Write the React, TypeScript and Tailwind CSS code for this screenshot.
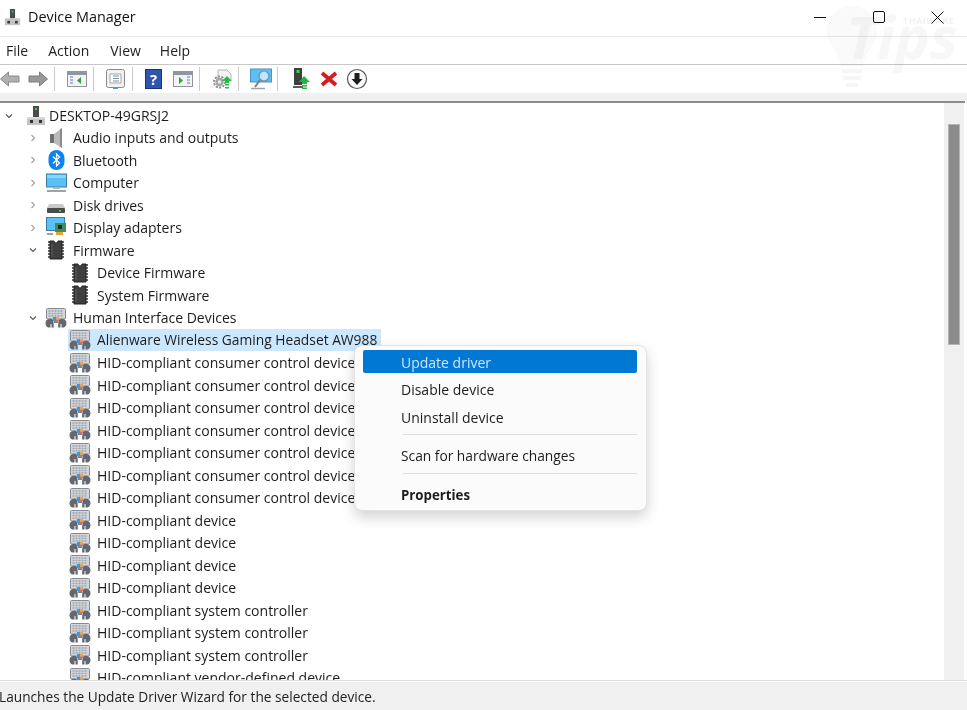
import React from "react";

const font = "font-['Open_Sans','Noto_Sans',sans-serif]";

const HidIcon = () => (
  <svg width="22" height="20" viewBox="0 0 22 20" className="shrink-0">
    <rect x="1.500" y="0.500" width="19" height="10.500" rx="1" fill="#d3d7dc" stroke="#858a92" />
    <path d="M3.500 3h15M3.500 5.500h15M3.500 8h15" stroke="#9fa4ac" strokeWidth="1.400" strokeDasharray="2 1" />
    <path d="M3.500 19.500C1 19 0 16 .8 13.500 1.500 11.500 4 10.500 6.500 11c2.300.5 2.300 4.500 2.300 8.500H6.500v-3.500h-1v3.500z" fill="#636870" />
    <path d="M18.500 19.500C21 19 22 16 21.200 13.500 20.500 11.500 18 10.500 15.500 11c-2.300.5-2.300 4.500-2.300 8.500h2.300v-3.500h1v3.500z" fill="#636870" />
    <rect x="8" y="9" width="3" height="4" fill="#3f97e2" />
    <rect x="11" y="9" width="3" height="2.500" fill="#e9a84a" />
    <rect x="11" y="11.500" width="3" height="1.500" fill="#d87070" />
    <rect x="9" y="13" width="4" height="2" fill="#808590" />
  </svg>
);

const ChipIcon = () => (
  <svg width="18" height="20" viewBox="0 0 18 20" className="shrink-0">
    <path d="M1 2h2M1 5h2M1 8h2M1 11h2M1 14h2M1 17h2M15 2h2M15 5h2M15 8h2M15 11h2M15 14h2M15 17h2" stroke="#333" strokeWidth="1.600" />
    <path d="M3 1h4a2 2 0 0 0 4 0h4v18H3z" fill="#3f3f3f" stroke="#222" />
    <path d="M5 4v13" stroke="#5d5d5d" />
  </svg>
);

const PcIcon = () => (
  <svg width="20" height="20" viewBox="0 0 20 20" className="shrink-0">
    <rect x="7" y="0" width="6" height="11" fill="#4c4c4c" />
    <rect x="9" y="2" width="2" height="2" fill="#39d353" />
    <rect x="1" y="11" width="18" height="8" fill="#c4c4c4" />
    <rect x="1" y="11" width="18" height="2" fill="#dadada" />
    <rect x="4" y="14" width="3" height="3" fill="#333" />
    <rect x="13" y="14" width="3" height="3" fill="#333" />
  </svg>
);

const SpeakerIcon = () => (
  <svg width="20" height="20" viewBox="0 0 20 20" className="shrink-0">
    <path d="M4 6h4v9H4z" fill="#6f6f6f" />
    <path d="M8 6l8-6v20l-8-5z" fill="#b9b9b9" />
    <path d="M14 1.500l2-1.500v20l-2-1.300z" fill="#8a8a8a" />
  </svg>
);

const BluetoothIcon = () => (
  <svg width="17" height="20" viewBox="0 0 17 20" className="ml-[1px] shrink-0">
    <rect x="0.500" y="0" width="16" height="20" rx="8" fill="#0a84f0" />
    <path d="M5 6.500l6.500 6.500-3 3V4l3 3L5 13.500" fill="none" stroke="#fff" strokeWidth="1.200" />
  </svg>
);

const MonitorIcon = () => (
  <svg width="21" height="20" viewBox="0 0 21 20" className="shrink-0">
    <rect x="0.500" y="1" width="20" height="13" fill="#5bc0f5" stroke="#3a7ca5" />
    <path d="M1 2h19v3H1z" fill="#8ad6fa" />
    <rect x="7" y="14" width="7" height="2" fill="#b5b5b5" />
    <rect x="1" y="17" width="19" height="2" fill="#9ea3a8" />
  </svg>
);

const DiskIcon = () => (
  <svg width="20" height="20" viewBox="0 0 20 20" className="shrink-0">
    <path d="M3 9h14l2 4H1z" fill="#c9c9c9" />
    <rect x="1" y="13" width="18" height="5" rx="1" fill="#4a4a4a" />
    <rect x="13" y="15" width="2" height="1.500" fill="#45e060" />
  </svg>
);

const DisplayIcon = () => (
  <svg width="21" height="21" viewBox="0 0 21 21" className="shrink-0">
    <rect x="0.500" y="0.500" width="18" height="13" fill="#5bc0f5" stroke="#3a7ca5" />
    <rect x="9" y="6" width="11" height="9" fill="#3f8f5a" />
    <rect x="12" y="8" width="4" height="4" fill="#23292b" />
    <rect x="10" y="15" width="7" height="3" fill="#e9a52f" />
    <rect x="1" y="16" width="6" height="2" fill="#9ea3a8" />
  </svg>
);

const Chevron = ({ open }: { open: boolean }) => (
  <svg width="8" height="8" viewBox="0 0 8 8" className="shrink-0">
    <path d={open ? "M1 2.500l3 3 3-3" : "M2.500 1l3 3-3 3"} fill="none" stroke={open ? "#555" : "#a0a0a0"} strokeWidth="1.100" />
  </svg>
);

const Sep = () => <div className="h-[24px] w-px shrink-0 bg-[#c9c9c9]" />;

const ToolbarIcons = () => (
  <div className="flex h-[28px] shrink-0 items-center">
    <div className="flex w-[54px] shrink-0 items-center">
      <svg width="20" height="16" viewBox="0 0 20 16" className="shrink-0">
        <path d="M.5 8l8-7v4h10.500v6H8.500v4z" fill="#b0b0b0" stroke="#8a8a8a" />
      </svg>
      <svg width="20" height="16" viewBox="0 0 20 16" className="ml-[8px] shrink-0">
        <path d="M19.500 8l-8-7v4H1v6h10.500v4z" fill="#999" stroke="#7c7c7c" />
      </svg>
    </div>
    <Sep />
    <svg width="20" height="16" viewBox="0 0 20 16" className="ml-[12px] mr-[6px] shrink-0">
      <rect x="0.500" y="0.500" width="19" height="15" fill="#f3f3f3" stroke="#8e96a0" />
      <rect x="1" y="1" width="18" height="3" fill="#8e96a0" />
      <path d="M3 6h3M3 9h3M3 12h3" stroke="#5a7fb5" />
      <path d="M14 6v7l-4-3.500z" fill="#30a040" />
    </svg>
    <Sep />
    <svg width="19" height="20" viewBox="0 0 19 20" className="ml-[12px] mr-[7px] shrink-0">
      <rect x="0.500" y="0.500" width="18" height="18" rx="2" fill="#f2f2f2" stroke="#8a8a8a" />
      <path d="M4 5h11v9H4z" fill="#fff" stroke="#a5a5a5" />
      <path d="M7 7h6M7 9.500h6M7 12h6" stroke="#7b8ea5" />
      <rect x="7" y="18" width="5" height="2" fill="#3aa0e0" />
    </svg>
    <Sep />
    <div className="ml-[12px] flex h-[20px] w-[17px] shrink-0 items-center justify-center border border-[#1c3475] bg-[#2f55b0] text-[15px] font-bold leading-none text-white">?</div>
    <svg width="20" height="16" viewBox="0 0 20 16" className="ml-[11px] mr-[6px] shrink-0">
      <rect x="0.500" y="0.500" width="19" height="15" fill="#f3f3f3" stroke="#8e96a0" />
      <rect x="1" y="1" width="18" height="3" fill="#8e96a0" />
      <path d="M14 6h3M14 9h3M14 12h3" stroke="#5a7fb5" />
      <path d="M6 6v7l4-3.500z" fill="#30a040" />
    </svg>
    <Sep />
    <svg width="21" height="21" viewBox="0 0 21 21" className="ml-[12px] mr-[5px] shrink-0">
      <path d="M6 1h9l4 4v6H6z" fill="#f3f3f3" stroke="#b5b5b5" />
      <circle cx="7.500" cy="13" r="5.500" fill="none" stroke="#8f8f8f" strokeWidth="2" strokeDasharray="2 1.400" />
      <circle cx="7.500" cy="13" r="4.200" fill="#a5a5a5" />
      <circle cx="7.500" cy="13" r="1.800" fill="#eee" />
      <path d="M15 7l5 5h-3v2h-4v-2h-3z" fill="#2fb84a" />
      <path d="M13 15h4v1.500h-4zM13 18h4v1.500h-4z" fill="#2fb84a" />
    </svg>
    <Sep />
    <svg width="22" height="22" viewBox="0 0 22 22" className="ml-[11px] mr-[5px] shrink-0">
      <rect x="0.500" y="1" width="21" height="13" fill="#5bc0f5" stroke="#4e93bd" />
      <path d="M1 20.500h14" stroke="#9ea3a8" strokeWidth="1.500" />
      <circle cx="14" cy="8" r="5" fill="#bfe6fa" stroke="#6f8fa5" strokeWidth="1.200" />
      <path d="M10 12l-5 7" stroke="#7d7d7d" strokeWidth="2" />
    </svg>
    <Sep />
    <svg width="17" height="22" viewBox="0 0 17 22" className="ml-[15px] shrink-0">
      <rect x="1" y="0" width="8" height="17" fill="#3f3f3f" />
      <rect x="3.500" y="2" width="3" height="3" fill="#39d353" />
      <rect x="0" y="18" width="10" height="2" fill="#5a5a5a" />
      <path d="M11 8l6 6h-3v2H9v-2H6z" fill="#23b33f" />
      <path d="M9 17h5v1.400H9zM9 19.500h5v1.400H9z" fill="#23b33f" />
    </svg>
    <svg width="18" height="18" viewBox="0 0 18 18" className="ml-[10px] shrink-0">
      <path d="M2 3l14 12M16 3L2 15" stroke="#d81c1c" strokeWidth="3.800" />
    </svg>
    <svg width="22" height="22" viewBox="0 0 22 22" className="ml-[8px] shrink-0">
      <circle cx="11" cy="11" r="9.500" fill="#fbfbfb" stroke="#5a5a5a" strokeWidth="1.200" />
      <path d="M8.500 5h5v6h3L11 17l-5.500-6h3z" fill="#1e1e1e" />
    </svg>
  </div>
);

const Row = ({
  depth,
  label,
  icon,
  open,
  selected,
}: {
  depth: number;
  label: string;
  icon: React.ReactNode;
  open?: boolean;
  selected?: boolean;
}) => {
  const iconBox = <div className="flex w-[24px] shrink-0 items-center justify-center">{icon}</div>;
  return (
    <div className="flex h-[22.5px] shrink-0 items-center">
      <div style={{ width: depth * 24 }} className="shrink-0" />
      <div className="flex w-[44px] shrink-0 items-center pl-[29px]">{open !== undefined && <Chevron open={open} />}</div>
      {selected ? (
        <div className="flex h-[22px] items-center bg-[#cce8ff] pr-[4px]">
          {iconBox}
          <span className="ml-[5px] whitespace-nowrap text-[13.8px]">{label}</span>
        </div>
      ) : (
        <>
          {iconBox}
          <span className="ml-[5px] whitespace-nowrap">{label}</span>
        </>
      )}
    </div>
  );
};

const hidConsumer = Array.from({ length: 7 }, () => "HID-compliant consumer control device");
const hidDevice = Array.from({ length: 4 }, () => "HID-compliant device");
const hidSystem = Array.from({ length: 3 }, () => "HID-compliant system controller");

const App = () => {
  return (
    <div className={`relative flex h-[710px] w-[967px] flex-col overflow-hidden bg-white text-[14px] text-[#1c1c1c] ${font}`}>
      {/* title bar */}
      <div className="flex h-[37px] shrink-0 items-center border-b border-[#e6e6e6] pb-[2px] pl-[4px]">
        <svg width="17" height="19" viewBox="0 0 20 20" className="shrink-0">
          <rect x="7" y="0" width="6" height="11" fill="#4c4c4c" />
          <rect x="9" y="2" width="2" height="2" fill="#39d353" />
          <rect x="1" y="11" width="18" height="8" fill="#c4c4c4" />
          <rect x="4" y="14" width="3" height="3" fill="#333" />
          <rect x="13" y="14" width="3" height="3" fill="#333" />
        </svg>
        <span className="ml-[7px] text-[14.4px] text-[#111]">Device Manager</span>
        <div className="ml-auto flex items-center">
          <div className="h-px w-[12px] bg-[#111]" />
          <div className="ml-[47px] h-[12px] w-[12px] rounded-[2px] border border-[#111]" />
          <svg width="13" height="13" viewBox="0 0 13 13" className="ml-[46px] mr-[23px]">
            <path d="M0.500 0.500l12 12M12.500 0.500l-12 12" stroke="#111" />
          </svg>
        </div>
      </div>
      {/* menu */}
      <div className="flex h-[28px] shrink-0 items-center border-b border-[#c8c8c8] pl-[6px] text-[#222]">
        <span>File</span>
        <span className="ml-[20px]">Action</span>
        <span className="ml-[21px]">View</span>
        <span className="ml-[19px]">Help</span>
      </div>
      <ToolbarIcons />
      <div className="h-[8px] shrink-0 bg-[#f0f0f0]" />
      <div className="mr-[2px] h-[2px] shrink-0 bg-[#8c8c8c]" />
      {/* tree */}
      <div className="flex min-h-0 flex-1 pr-[3px]">
        <div className="min-w-0 flex-1 overflow-hidden pt-[1.75px]">
          <div className="flex h-[21.5px] items-center pl-[5px]">
            <div className="w-[19px] shrink-0"><Chevron open /></div>
            <div className="flex w-[24px] shrink-0 items-center justify-center"><PcIcon /></div>
            <span className="ml-[1px] whitespace-nowrap">DESKTOP-49GRSJ2</span>
          </div>
          <Row depth={0} label="Audio inputs and outputs" icon={<SpeakerIcon />} open={false} />
          <Row depth={0} label="Bluetooth" icon={<BluetoothIcon />} open={false} />
          <Row depth={0} label="Computer" icon={<MonitorIcon />} open={false} />
          <Row depth={0} label="Disk drives" icon={<DiskIcon />} open={false} />
          <Row depth={0} label="Display adapters" icon={<DisplayIcon />} open={false} />
          <Row depth={0} label="Firmware" icon={<ChipIcon />} open />
          <Row depth={1} label="Device Firmware" icon={<ChipIcon />} />
          <Row depth={1} label="System Firmware" icon={<ChipIcon />} />
          <Row depth={0} label="Human Interface Devices" icon={<HidIcon />} open />
          <Row depth={1} label="Alienware Wireless Gaming Headset AW988" icon={<HidIcon />} selected />
          {hidConsumer.map((name, i) => (
            <Row key={i} depth={1} label={name} icon={<HidIcon />} />
          ))}
          {hidDevice.map((name, i) => (
            <Row key={i} depth={1} label={name} icon={<HidIcon />} />
          ))}
          {hidSystem.map((name, i) => (
            <Row key={i} depth={1} label={name} icon={<HidIcon />} />
          ))}
          <Row depth={1} label="HID-compliant vendor-defined device" icon={<HidIcon />} />
        </div>
        <div className="flex w-[20px] shrink-0 justify-end bg-[#f0f0f0] pr-[4px] pt-[21px]">
          <div className="h-[221px] w-[12px] border border-[#b5b5b5] bg-[#8b8b8b]" />
        </div>
      </div>
      {/* status bar */}
      <div className="h-[30px] shrink-0 border-t border-[#dcdcdc]">
        <div className="flex h-full items-center border-t border-white bg-[#f0f0f0] pt-[2px] text-[#222]">
          <span className="-ml-[1px] whitespace-nowrap text-[13.7px]">Launches the Update Driver Wizard for the selected device.</span>
        </div>
      </div>

      {/* context menu */}
      <div className="absolute left-[354px] top-[345px] w-[293px] rounded-[8px] border border-[#e3e3e3] bg-[#fbfbfb] pl-[8px] pr-[9px] pt-[4px] pb-[1px] shadow-[0_6px_14px_rgba(0,0,0,0.18)]">
        <div className="flex h-[23px] items-center rounded-[2px] bg-[#0078d4] pl-[38px] pt-[1px] text-[#cfe6fa]">Update driver</div>
        <div className="mt-[3px] flex h-[27.5px] items-center pl-[38px]">Disable device</div>
        <div className="flex h-[27.5px] items-center pl-[38px]">Uninstall device</div>
        <div className="ml-[40px] mt-[3px] h-px bg-[#dedede]" />
        <div className="flex h-[38px] items-center pl-[38px] pt-[4px] text-[13.75px]">Scan for hardware changes</div>
        <div className="ml-[40px] h-px bg-[#dedede]" />
        <div className="flex h-[35px] items-center pl-[38px] pt-[9px] text-[13.25px] font-bold">Properties</div>
      </div>

      {/* watermark */}
      <svg width="52" height="84" viewBox="0 0 52 84" className="pointer-events-none absolute left-[826px] top-[5px] mix-blend-multiply">
        <path d="M26 1C12 1 1 12 1 26c0 9 5 15 9 21 3 5 4 9 5 14h22c1-5 2-9 5-14 4-6 9-12 9-21C51 12 40 1 26 1z" fill="#fafafa" />
        <path d="M16 64h20v4H16zM17 71h18v4H17zM20 78h12v4H20z" fill="#f6f6f6" />
      </svg>
      <div className="pointer-events-none absolute left-[846px] top-[7px] text-[59px] font-bold italic leading-none text-[#f7f7f7] mix-blend-multiply">Tips</div>
      <div className="pointer-events-none absolute left-[903px] top-[14px] text-[9px] font-bold tracking-[0.5px] text-[#f1f1f1] mix-blend-multiply">THAIWARE</div>
    </div>
  );
};

export default App;
